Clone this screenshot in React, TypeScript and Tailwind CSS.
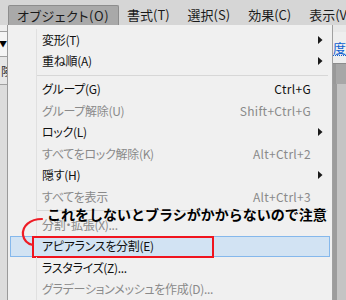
import React from 'react';

type Item =
  | { sep: true }
  | { label: string; sc?: string; arrow?: boolean; dis?: boolean; hl?: boolean };

const items: Item[] = [
  { label: '変形(T)', arrow: true },
  { label: '重ね順(A)', arrow: true },
  { sep: true },
  { label: 'グループ(G)', sc: 'Ctrl+G' },
  { label: 'グループ解除(U)', sc: 'Shift+Ctrl+G', dis: true },
  { label: 'ロック(L)', arrow: true },
  { label: 'すべてをロック解除(K)', sc: 'Alt+Ctrl+2', dis: true },
  { label: '隠す(H)', arrow: true },
  { label: 'すべてを表示', sc: 'Alt+Ctrl+3', dis: true },
  { sep: true },
  { label: '分割・拡張(X)...', dis: true },
  { label: 'アピアランスを分割(E)', hl: true },
  { label: 'ラスタライズ(Z)...' },
  { label: 'グラデーションメッシュを作成(D)...', dis: true },
];

const Arrow = () => (
  <svg width="5" height="8" viewBox="0 0 5 8">
    <path d="M0 0 L4.5 4 L0 8 Z" fill="#1a1a1a" />
  </svg>
);

export default function App() {
  const font = "[font-family:'Noto_Sans_CJK_JP','Noto_Sans',sans-serif] [font-feature-settings:'palt']";
  return (
    <div className={`relative w-[346px] h-[300px] overflow-hidden bg-[#d6d6d6] text-[12px] ${font}`}>
      {/* menubar */}
      <div className="h-[25px] flex items-end pl-[8px] text-[13px] text-[#1a1a1a] whitespace-nowrap">
        <div className="shrink-0 h-[20px] w-[111px] flex items-center pl-[8px] bg-[#a9a9a9] border border-b-0 border-[#8d8d8d] rounded-t-[2px] tracking-[0.6px]">
          オブジェクト(O)
        </div>
        <div className="shrink-0 h-[20px] flex items-center pl-[8px]">書式(T)</div>
        <div className="shrink-0 h-[20px] flex items-center pl-[18px]">選択(S)</div>
        <div className="shrink-0 h-[20px] flex items-center pl-[18px]">効果(C)</div>
        <div className="shrink-0 h-[20px] flex items-center pl-[18px]">表示(V)</div>
      </div>

      <div className="flex h-[275px]">
        {/* left strip */}
        <div className="w-[8px] bg-[#dcdcdc] border-r border-[#9a9a9a] flex flex-col">
          <div className="h-[7px] bg-[#eeeeee] border-b border-[#a0a0a0]" />
          <div className="h-[25px] bg-[#f4f4f4] border-b border-[#a0a0a0] flex items-center justify-end text-[8px] leading-none text-black">
            ▼
          </div>
          <div className="h-[28px] bg-[#e6e6e6] border-b border-[#a0a0a0] flex items-center justify-end overflow-hidden text-[12px] text-[#333] whitespace-nowrap">
            <span className="-mr-[6px]">険</span>
          </div>
          <div className="flex-1" />
        </div>

        {/* menu */}
        <div className="w-[325px] bg-[#f0f0f0] border-r border-[#a0a0a0] pt-[4px] flex flex-col">
          {items.map((it, i) => {
            if ('sep' in it) {
              return (
                <div key={i} className="h-[7px] mx-[2px] flex">
                  <div className="w-[27px] border-r border-[#e0e0e0]" />
                  <div className="flex-1 flex items-center pr-[2px]">
                    <div className="h-px w-full bg-[#d7d7d7]" />
                  </div>
                </div>
              );
            }
            return (
              <div
                key={i}
                className={`relative h-[22px] mx-[2px] flex items-center whitespace-nowrap ${
                  it.hl ? 'bg-[#d2e3f3] border border-[#85b8ec]' : ''
                } ${it.dis ? 'text-[#8a8a8a]' : 'text-[#111]'}`}
              >
                <div className={`h-full ${it.hl ? 'w-[26px]' : 'w-[27px] border-r border-[#e0e0e0]'}`} />
                <div className="pl-[5px] flex-1 tracking-[-0.3px]">{it.label}</div>
                {it.sc && <div className="tracking-[0.3px]">{it.sc}</div>}
                <div className="w-[19px] flex items-center pl-[7px]">{it.arrow && <Arrow />}</div>
                {it.hl && (
                  <div className="absolute left-[21px] top-[-1px] w-[182px] h-[22px] border-2 border-[#f0141e]" />
                )}
              </div>
            );
          })}
        </div>

        {/* right strip */}
        <div className="flex-1 flex flex-col bg-[#c4c4c4]">
          <div className="h-[7px] bg-[#e8e8e8]" />
          <div className="h-[32px] bg-[#eeeeee] border-b border-[#8c8c8c] flex items-center overflow-hidden">
            <span className="text-[13px] text-[#1060d0] border-b border-dotted border-[#1060d0] leading-[15px]">度</span>
          </div>
          <div className="h-[20px] bg-[#a7a7a7] border-l-[3px] border-[#999]" />
          <div className="flex-1 border-l-[4px] border-[#9c9c9c]" />
        </div>
      </div>

      {/* annotation */}
      <div className="absolute left-[47px] top-[205px] text-[14px] font-bold text-black leading-[18px] whitespace-nowrap [font-feature-settings:normal]">
        これをしないとブラシがかからないので注意
      </div>
      <svg className="absolute left-0 top-0" width="346" height="300" viewBox="0 0 346 300">
        <path d="M42 219 C 30 219 22 226 23 235 C 24 241 28 244 33 245" fill="none" stroke="#ee1c25" strokeWidth="2.2" strokeLinecap="round" />
      </svg>
    </div>
  );
}
